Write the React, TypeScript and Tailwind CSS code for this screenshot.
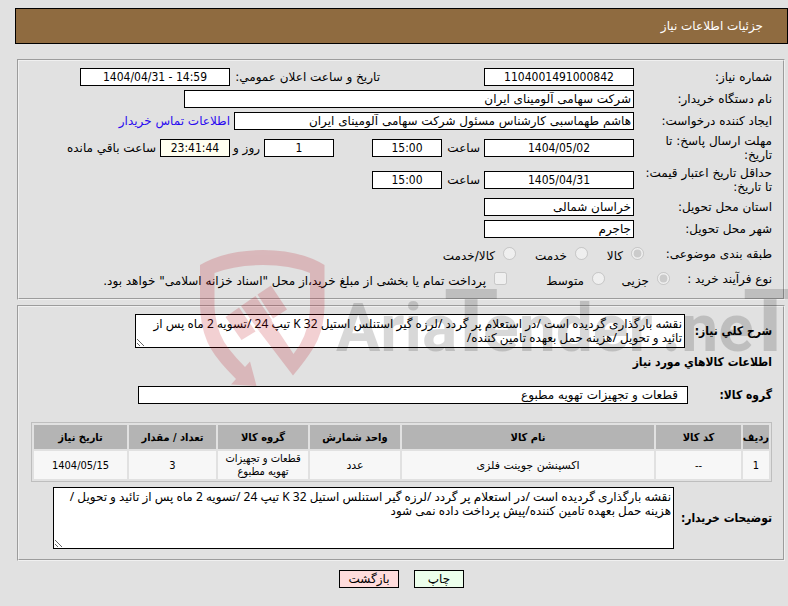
import { useId } from "react";
import type { ReactNode } from "react";

const box = "h-[18px] min-w-0 border border-black px-[2px] text-[12px] leading-[14px]";
const condensed = "font-['DejaVu_Sans_Condensed','DejaVu_Sans',sans-serif]";
const digits = `text-center ${condensed}`;
const area = "border border-black bg-white px-[2px] py-[2px] font-['Noto_Sans','DejaVu_Sans',sans-serif]";

function Field({ label, value, className, inputClass, children }: {
  label: string;
  value: string;
  className: string;
  inputClass: string;
  children?: ReactNode;
}) {
  const id = useId();
  return (
    <div className={`flex items-center ${className}`}>
      <label htmlFor={id} className="w-[138px] shrink-0 pe-2 leading-[14px]">{label}</label>
      <div className="flex min-w-0 grow items-center gap-1">
        <input id={id} readOnly value={value} className={`${box} ${inputClass}`} />
        {children}
      </div>
    </div>
  );
}

function Choice({ type, name, label, checked, className }: {
  type: "radio" | "checkbox";
  name: string;
  label: string;
  checked?: boolean;
  className: string;
}) {
  return (
    <label className={`flex shrink-0 items-start whitespace-nowrap ${className}`}>
      <input type={type} name={name} disabled defaultChecked={checked} className="size-[13px] shrink-0" />
      <span className="ms-2 pt-[2px] leading-[14px]">{label}</span>
    </label>
  );
}

const columns = [
  { title: "ردیف", width: "w-[26px]", value: "1", font: condensed },
  { title: "کد کالا", width: "w-[85px]", value: "--", font: condensed },
  { title: "نام کالا", width: "", value: "اکسپنشن جوینت فلزی", font: "" },
  { title: "واحد شمارش", width: "w-[90px]", value: "عدد", font: "" },
  { title: "گروه کالا", width: "w-[90px]", value: "قطعات و تجهیزات تهویه مطبوع", font: condensed },
  { title: "تعداد / مقدار", width: "w-[87px]", value: "3", font: condensed },
  { title: "تاریخ نیاز", width: "w-[93px]", value: "1404/05/15", font: condensed },
];

function Watermark() {
  return (
    <svg aria-hidden="true" className="pointer-events-none absolute top-[245px] left-[195px] h-[150px] w-[593px]" viewBox="195 245 593 150">
      <g fill="#b9000f" opacity="0.18">
        <path d="M200 265 Q226 250 263 250 Q300 250 324.500 265 V307 Q324 330 314 347 Q306 360 293 375.500 L259 331 L271 320 L293.500 354 Q309 335 310 308 V273 Q290 265 263 265 Q235 265 214.500 273 V307 Q216 333 229 349 Q236 358 245 367 L250 361.500 L256.500 386 L231 384.500 L236 379 Q218 361 211 349 Q201 332 200 307 Z" />
        <path d="M225.500 317 L239 307.500 L255.500 331.500 L241.500 340 Z" />
        <path d="M241 306 L255.500 296 L272 320 L259 331 Z" />
        <path d="M257.500 294.500 L271 285.500 L287 309.500 L273 318.500 Z" />
      </g>
      <g opacity="0.15">
        <text y="351" direction="ltr" fill="#000" className="font-[Roboto,sans-serif] text-[66px] font-bold">
          <tspan x="336">Aria</tspan>
          <tspan x="444" className="text-[88px]">T</tspan>
          <tspan x="483">ender</tspan>
          <tspan x="662">.ne</tspan>
          <tspan x="743" className="text-[88px]">T</tspan>
        </text>
      </g>
    </svg>
  );
}

export default function App() {
  return (
    <div dir="rtl" className="relative min-h-screen overflow-hidden bg-[#e1e1e1] pt-2 pb-[18px] font-['DejaVu_Sans',sans-serif] text-[12px] leading-[14px] text-black">
      <header className="me-[15px] flex h-9 items-center border border-black bg-[#8f6b40] ps-6 text-white">
        <h1>جزئیات اطلاعات نیاز</h1>
      </header>

      <fieldset className="ms-[3px] me-[17px] mt-[15px] border-2 border-[#f0f0f0] px-[11px] pt-[5px] pb-[10px] [border-style:groove]">
        <Field label="شماره نیاز:" value="1104001491000842" className="h-[22px]" inputClass={`w-[150px] bg-white ${digits}`}>
          <label htmlFor="announced" className="ms-[100px] w-[146px] shrink-0 whitespace-nowrap">تاریخ و ساعت اعلان عمومي:</label>
          <input id="announced" readOnly dir="ltr" value="1404/04/31 - 14:59" className={`${box} w-[150px] bg-white ${digits}`} />
        </Field>
        <Field label="نام دستگاه خریدار:" value="شرکت سهامی آلومینای ایران" className="h-[22px]" inputClass="w-[450px] bg-white" />
        <Field label="ایجاد کننده درخواست:" value="هاشم طهماسبی کارشناس مسئول شرکت سهامی آلومینای ایران" className="h-[22px]" inputClass="w-[400px] bg-white">
          <a href="#contact" className="whitespace-nowrap text-[#2a0af0]">اطلاعات تماس خریدار</a>
        </Field>
        <Field label="مهلت ارسال پاسخ: تا تاریخ:" value="1404/05/02" className="h-8" inputClass={`w-[150px] bg-white ${digits}`}>
          <label htmlFor="reply-time" className="w-[34px] shrink-0">ساعت</label>
          <input id="reply-time" readOnly value="15:00" className={`${box} w-[70px] bg-white ${digits}`} />
          <input aria-label="روز" readOnly value="1" className={`${box} ms-[34px] w-[70px] bg-white ${digits}`} />
          <span className="w-[26px] shrink-0 whitespace-nowrap">روز و</span>
          <input id="remaining" readOnly value="23:41:44" className={`${box} w-[70px] bg-[#fffff0] ${digits}`} />
          <label htmlFor="remaining" className="whitespace-nowrap">ساعت باقي مانده</label>
        </Field>
        <Field label="حداقل تاریخ اعتبار قیمت: تا تاریخ:" value="1405/04/31" className="h-8" inputClass={`w-[150px] bg-white ${digits}`}>
          <label htmlFor="price-time" className="w-[34px] shrink-0">ساعت</label>
          <input id="price-time" readOnly value="15:00" className={`${box} w-[70px] bg-white ${digits}`} />
        </Field>
        <Field label="استان محل تحویل:" value="خراسان شمالی" className="h-[22px]" inputClass="w-[150px] bg-white" />
        <Field label="شهر محل تحویل:" value="جاجرم" className="h-[22px]" inputClass="w-[150px] bg-white" />
        <div role="radiogroup" aria-label="طبقه بندی موضوعی" className="flex pt-[7px] pb-1">
          <span className="w-[128px] shrink-0">طبقه بندی موضوعی:</span>
          <Choice type="radio" name="subject" label="کالا" checked className="w-14" />
          <Choice type="radio" name="subject" label="خدمت" className="w-[72px]" />
          <Choice type="radio" name="subject" label="کالا/خدمت" className="" />
        </div>
        <div role="radiogroup" aria-label="نوع فرآیند خرید" className="flex pt-[5px]">
          <span className="w-[102px] shrink-0">نوع فرآیند خرید :</span>
          <Choice type="radio" name="process" label="جزیی" checked className="w-[65px]" />
          <Choice type="radio" name="process" label="متوسط" className="w-[98px]" />
          <Choice type="checkbox" name="treasury" label={'پرداخت تمام یا بخشی از مبلغ خرید،از محل "اسناد خزانه اسلامی" خواهد بود.'} className="" />
        </div>
      </fieldset>

      <fieldset className="ms-[3px] me-[17px] mt-[5px] border-2 border-[#f0f0f0] px-[11px] pt-[7px] pb-[10px] [border-style:groove]">
        <div className="flex items-center">
          <label htmlFor="summary" className={`w-[87px] shrink-0 font-bold ${condensed}`}>شرح کلي نياز:</label>
          <textarea id="summary" readOnly className={`h-[34px] w-[550px] overflow-hidden ${area}`} defaultValue="نقشه بارگذاری گردیده است /در استعلام پر گردد /لرزه گیر استنلس استیل K 32 تیپ 24 /تسویه 2 ماه پس از تائید و تحویل /هزینه حمل بعهده تامین کننده/" />
        </div>
        <h2 className={`mt-[7px] font-bold ${condensed}`}>اطلاعات کالاهاي مورد نياز</h2>
        <div className="mt-[17px] flex items-center">
          <label htmlFor="group" className={`w-[84px] shrink-0 font-bold ${condensed}`}>گروه کالا:</label>
          <input id="group" readOnly value="قطعات و تجهیزات تهویه مطبوع" className="h-[18px] w-[550px] min-w-0 border border-black bg-white px-[9px] leading-[14px]" />
        </div>
        <table className="mt-[18px] w-full max-w-[741px] table-fixed border-separate border-spacing-[2px] border border-[#bebebe] text-center text-[11px] leading-[13px]">
          <thead>
            <tr>
              {columns.map((c) => (
                <th key={c.title} scope="col" className={`h-6 bg-[#b4b4b4] p-0 font-bold whitespace-nowrap ${condensed} ${c.width}`}>{c.title}</th>
              ))}
            </tr>
          </thead>
          <tbody>
            <tr>
              {columns.map((c) => (
                <td key={c.title} className={`h-7 bg-[#f7f7f7] p-0 ${c.font}`}>{c.value}</td>
              ))}
            </tr>
          </tbody>
        </table>
        <div className="mt-[5px] flex items-center">
          <label htmlFor="notes" className={`w-[98px] shrink-0 font-bold ${condensed}`}>توضیحات خریدار:</label>
          <textarea id="notes" readOnly className={`h-[62px] w-[621px] ${area}`} defaultValue="نقشه بارگذاری گردیده است /در استعلام پر گردد /لرزه گیر استنلس استیل K 32 تیپ 24 /تسویه 2 ماه پس از تائید و تحویل / هزینه حمل بعهده تامین کننده/پیش پرداخت داده نمی شود" />
        </div>
      </fieldset>

      <div className="me-[15px] mt-[9px] flex justify-center gap-[15px]">
        <button type="button" className="h-[18px] w-[50px] border border-black bg-[#ecffec]">چاپ</button>
        <button type="button" className="h-[18px] w-[60px] border border-black bg-[#ffdcdc]">بازگشت</button>
      </div>

      <Watermark />
    </div>
  );
}
